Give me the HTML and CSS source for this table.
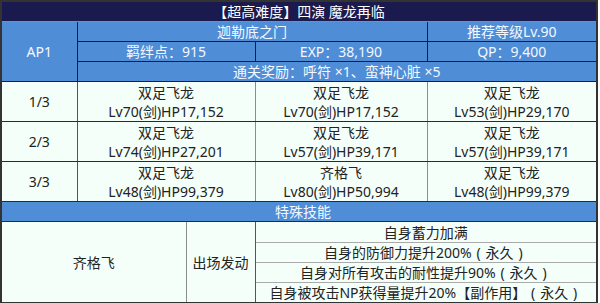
FILE: index.html
```html
<!DOCTYPE html>
<html lang="zh-CN">
<head>
<meta charset="utf-8">
<title>【超高难度】四演 魔龙再临</title>
<link rel="stylesheet" href="styles.css">
</head>
<body>
<table class="quest">
  <colgroup>
    <col class="c1"><col class="c2"><col class="c3"><col class="c4"><col class="c5">
  </colgroup>
  <tr class="row-title"><th colspan="5" class="title">【超高难度】四演 魔龙再临</th></tr>
  <tr class="row-info">
    <td rowspan="3" class="blue ap">AP1</td>
    <td colspan="3" class="blue">迦勒底之门</td>
    <td class="blue">推荐等级Lv.90</td>
  </tr>
  <tr class="row-info">
    <td colspan="2" class="blue">羁绊点<span class="colon">：</span>915</td>
    <td class="blue">EXP<span class="colon">：</span>38,190</td>
    <td class="blue">QP<span class="colon">：</span>9,400</td>
  </tr>
  <tr class="row-info">
    <td colspan="4" class="blue">通关奖励<span class="colon">：</span>呼符 ×1、蛮神心脏 ×5</td>
  </tr>
  <tr class="wave-row">
    <td class="wave">1/3</td>
    <td colspan="2" class="enemy">双足飞龙<br>Lv70(剑)HP17,152</td>
    <td class="enemy">双足飞龙<br>Lv70(剑)HP17,152</td>
    <td class="enemy">双足飞龙<br>Lv53(剑)HP29,170</td>
  </tr>
  <tr class="wave-row">
    <td class="wave">2/3</td>
    <td colspan="2" class="enemy">双足飞龙<br>Lv74(剑)HP27,201</td>
    <td class="enemy">双足飞龙<br>Lv57(剑)HP39,171</td>
    <td class="enemy">双足飞龙<br>Lv57(剑)HP39,171</td>
  </tr>
  <tr class="wave-row">
    <td class="wave">3/3</td>
    <td colspan="2" class="enemy">双足飞龙<br>Lv48(剑)HP99,379</td>
    <td class="enemy">齐格飞<br>Lv80(剑)HP50,994</td>
    <td class="enemy">双足飞龙<br>Lv48(剑)HP99,379</td>
  </tr>
  <tr class="row-skillhead"><td colspan="5" class="blue">特殊技能</td></tr>
  <tr class="skill">
    <td colspan="2" rowspan="4" class="sk-name">齐格飞</td>
    <td rowspan="4" class="sk-trigger">出场发动</td>
    <td colspan="2" class="eff first">自身蓄力加满</td>
  </tr>
  <tr class="skill"><td colspan="2" class="eff">自身的防御力提升200%<span class="fp">(</span>永久<span class="fp">)</span></td></tr>
  <tr class="skill"><td colspan="2" class="eff">自身对所有攻击的耐性提升90%<span class="fp">(</span>永久<span class="fp">)</span></td></tr>
  <tr class="skill"><td colspan="2" class="eff last">自身被攻击NP获得量提升20%【副作用】<span class="fp">(</span>永久<span class="fp">)</span></td></tr>
</table>
</body>
</html>
```
FILE: styles.css
```css
html, body {
  margin: 0;
  padding: 0;
  background: #ffffff;
}

.quest {
  border-collapse: collapse;
  table-layout: fixed;
  width: 596px;
  font-family: "Noto Sans", "Noto Sans CJK SC", sans-serif;
  font-size: 14px;
  color: #222222;
  background: #f4fffa;
  border: 2px solid #333333;
}

.c1 { width: 76px; }
.c2 { width: 109px; }
.c3 { width: 69px; }
.c4 { width: 172px; }
.c5 { width: 170px; }

.quest th,
.quest td {
  padding: 0;
  text-align: center;
  vertical-align: middle;
  line-height: 19px;
  height: 19px;
  border: 1px solid #8c8c8c;
  white-space: nowrap;
  overflow: hidden;
}

.title {
  background: #1a1a4e;
  color: #ffffff;
  font-weight: normal;
  height: 20px;
  border: 1px solid #1a1a4e;
}

.blue {
  background: #4f8dd6;
  color: #f4f8ff;
}

.row-info td {
  border-color: #1c1c2c;
}

.colon {
  font-family: "Noto Sans CJK JP", "Noto Sans CJK SC", sans-serif;
}

.fp {
  display: inline-block;
  width: 14px;
  text-align: center;
}

.wave-row td {
  height: 39px;
  border-top: 1px solid #2a2a2a;
  border-bottom: 1px solid #2a2a2a;
}

.wave-row .wave {
  border-right-color: #555555;
}

.row-skillhead td {
  border-top: 1px solid #2a2a2a;
  border-bottom: 1px solid #2a2a2a;
  text-align: left;
  padding-left: 273px;
}

.sk-name {
  border-right-color: #9a9a9a;
}

.sk-trigger {
  border-right-color: #555555 !important;
}

.skill .eff {
  border-top-color: #aaaaaa;
  border-bottom-color: #aaaaaa;
}

.skill .eff.first {
  height: 20px;
  border-top-color: #2a2a2a;
}

.skill .eff.last {
  height: 18px;
}
```
